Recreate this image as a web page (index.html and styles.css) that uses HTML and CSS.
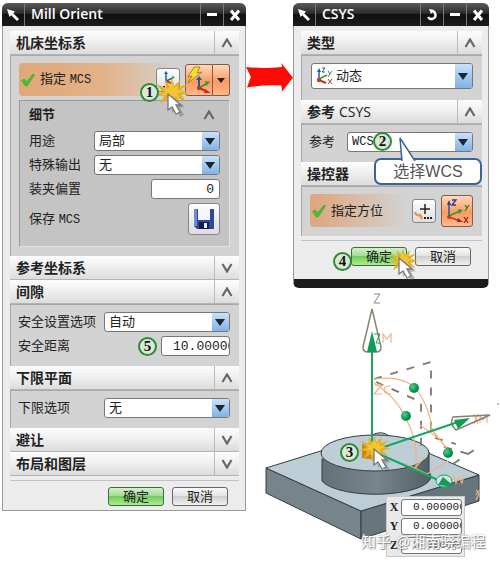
FILE: index.html
```
<!DOCTYPE html>
<html lang="zh-CN">
<head>
  <meta charset="UTF-8">
  <meta name="viewport" content="width=device-width, initial-scale=1.0">
  <title>Mill Orient</title>
  <link rel="stylesheet" href="styles.css">
</head>
<body>
  <svg class="defs" width="0" height="0" aria-hidden="true">
    <symbol id="chevron" viewBox="0 0 12 10"><path d="M1.5 9L6 1.5L10.5 9" fill="none" stroke="#666" stroke-width="2.2"/></symbol>
    <symbol id="pin" viewBox="0 0 14 14"><path d="M1 1L9 3.5L7.2 5.2L13 11L11 13L5.2 7.2L3.5 9Z" fill="#fff"/></symbol>
    <symbol id="minus" viewBox="0 0 12 12"><path d="M1 4H11V7H1Z" fill="#fff"/></symbol>
    <symbol id="close" viewBox="0 0 12 12"><path d="M2 1.5L10 11M10 1.5L2 11" stroke="#fff" stroke-width="3"/></symbol>
    <symbol id="check" viewBox="0 0 14 14"><path d="M0.5 7.5L3.5 6L5.5 9L12 1L13.5 2L6 13H4.5Z" fill="#3fc32e" stroke="#2c9e2a" stroke-width="0.5"/></symbol>
    <symbol id="burst" viewBox="0 0 36 30">
      <path d="M18 0L20 8L26 2L25 9L34 6L27 12L36 15L27 17L33 24L24 20L24 28L19 21L15 30L14 21L6 26L10 18L0 17L9 14L2 6L12 10L11 2L16 8Z" fill="#e0b02a"/>
      <path d="M18 5L20 10L24 7L23 12L30 13L23 16L26 21L19 18L15 23L14 17L7 17L12 14L8 9L14 11Z" fill="#f2c631"/>
    </symbol>
    <symbol id="cursor" viewBox="0 0 18 24">
      <path d="M4 3L5 20L9 16L13 24L17 22L13 15L18 14Z" fill="#555" opacity="0.35"/>
      <path d="M1 1L1 17L5 14L9 21L13 19L9 12L14 12Z" fill="#fff" stroke="#777" stroke-width="1.3"/>
    </symbol>
  </svg>

  <main class="page">
    <section class="dialog dialog-mill">
      <header class="titlebar">
        <span class="pin"><svg width="14" height="14"><use href="#pin"/></svg></span>
        <h1>Mill Orient</h1>
        <button aria-label="Minimize"><svg width="12" height="12"><use href="#minus"/></svg></button>
        <button aria-label="Close"><svg width="12" height="12"><use href="#close"/></svg></button>
      </header>

      <div class="dialog-body">
        <h2 class="group-title">机床坐标系<button aria-label="收起"><svg width="12" height="10"><use href="#chevron"/></svg></button></h2>
        <div class="group">
          <div class="specify">
            <svg width="14" height="14"><use href="#check"/></svg>
            <span class="grow">指定 <span class="mono">MCS</span></span>
            <div class="anchor">
              <button class="tool" aria-label="CSYS 对话框">
                <svg width="20" height="20" viewBox="0 0 20 20"><path d="M8 11V3M8 11L15 8" stroke="#268" stroke-width="1.5" fill="none"/><path d="M8 1L10 4H6Z" fill="#235a9a"/><path d="M14 6L17 7L14 9Z" fill="#2a9c3c"/><path d="M8 11L15 14" stroke="#c33" stroke-width="2"/><path d="M5 17H7M9 17H11M13 17H15" stroke="#222" stroke-width="2"/></svg>
              </button>
              <svg class="burst burst-mcs" width="36" height="30"><use href="#burst"/></svg>
              <b class="step step-1">1</b>
              <svg class="cursor cursor-mcs" width="18" height="24"><use href="#cursor"/></svg>
            </div>
            <div class="split">
              <button class="tool-hot" aria-label="自动判断">
                <svg width="27" height="28" viewBox="0 0 27 28"><path d="M8 1L14 1L11 7L16 6L2 17L6 10L2 11Z" fill="#f7dc2e" stroke="#8c742a" stroke-width="0.8"/><path d="M13 22V13" stroke="#245898" stroke-width="2"/><path d="M13 10L16 14H10Z" fill="#245898"/><path d="M13 22L20 18" stroke="#2a9c3c" stroke-width="2"/><path d="M19 15L24 16L20 20Z" fill="#2a9c3c"/><path d="M13 22L20 25" stroke="#d42a1a" stroke-width="2"/><path d="M19 23L25 27L18 27Z" fill="#d42a1a"/><circle cx="13" cy="22" r="2.2" fill="#b33"/></svg>
              </button>
              <button class="tool-hot drop" aria-label="更多"><svg width="8" height="6"><path d="M0 1H8L4 6Z" fill="#222"/></svg></button>
            </div>
          </div>

          <div class="details">
            <h3>细节<button aria-label="收起"><svg width="12" height="10"><use href="#chevron"/></svg></button></h3>
            <div class="row">
              <label for="use">用途</label>
              <span class="combo"><select id="use"><option>局部</option></select></span>
            </div>
            <div class="row">
              <label for="output">特殊输出</label>
              <span class="combo"><select id="output"><option>无</option></select></span>
            </div>
            <div class="row">
              <label for="offset">装夹偏置</label>
              <input class="field field-right" id="offset" type="text" value="0">
            </div>
            <div class="row row-save">
              <label for="save">保存 <span class="mono">MCS</span></label>
              <button class="tool tool-save" id="save" aria-label="保存 MCS">
                <svg width="22" height="22" viewBox="0 0 22 22"><path d="M1 1H21V21H4L1 18Z" fill="#2f4a9c"/><path d="M1 1H4V18H1Z" fill="#6f8ad0"/><path d="M5 1H17V12H5Z" fill="#f4f6fc"/><path d="M6 14H16V21H6Z" fill="#161e48"/><path d="M11 15H14V20H11Z" fill="#e8eaf4"/></svg>
              </button>
            </div>
          </div>
        </div>

        <h2 class="group-title">参考坐标系<button aria-label="展开"><svg class="flip" width="12" height="10"><use href="#chevron"/></svg></button></h2>

        <h2 class="group-title">间隙<button aria-label="收起"><svg width="12" height="10"><use href="#chevron"/></svg></button></h2>
        <div class="group group-narrow">
          <div class="row">
            <label for="safe">安全设置选项</label>
            <span class="combo"><select id="safe"><option>自动</option></select></span>
          </div>
          <div class="row">
            <label for="distance">安全距离</label>
            <b class="step">5</b>
            <input class="field" id="distance" type="text" value="10.000000">
          </div>
        </div>

        <h2 class="group-title">下限平面<button aria-label="收起"><svg width="12" height="10"><use href="#chevron"/></svg></button></h2>
        <div class="group group-narrow">
          <div class="row">
            <label for="lower">下限选项</label>
            <span class="combo"><select id="lower"><option>无</option></select></span>
          </div>
        </div>

        <h2 class="group-title">避让<button aria-label="展开"><svg class="flip" width="12" height="10"><use href="#chevron"/></svg></button></h2>
        <h2 class="group-title">布局和图层<button aria-label="展开"><svg class="flip" width="12" height="10"><use href="#chevron"/></svg></button></h2>

        <footer class="actions">
          <button class="btn btn-ok">确定</button>
          <button class="btn">取消</button>
        </footer>
      </div>
    </section>

    <svg class="arrow" viewBox="0 0 48 29" aria-hidden="true"><path d="M0 4Q18 6 37 4L36 0L48 15L37 29L36 23Q18 22 1 25L5 14Z" fill="#fb0a06"/></svg>

    <section class="dialog dialog-csys">
      <header class="titlebar">
        <span class="pin"><svg width="14" height="14"><use href="#pin"/></svg></span>
        <h1>CSYS</h1>
        <button aria-label="Reset"><svg width="12" height="12" viewBox="0 0 12 12"><path d="M5 2A4 4 0 1 1 2 8" fill="none" stroke="#fff" stroke-width="2.4"/><path d="M3 0L8 1L5 5Z" fill="#fff"/></svg></button>
        <button aria-label="Minimize"><svg width="12" height="12"><use href="#minus"/></svg></button>
        <button aria-label="Close"><svg width="12" height="12"><use href="#close"/></svg></button>
      </header>

      <div class="dialog-body">
        <h2 class="group-title"><label for="type">类型</label><button aria-label="收起"><svg width="12" height="10"><use href="#chevron"/></svg></button></h2>
        <div class="group group-type">
          <span class="combo combo-type">
            <svg class="combo-icon" width="17" height="18" viewBox="0 0 17 18"><path d="M3 13V4" stroke="#245898" stroke-width="1.5"/><path d="M3 1L5 5H1Z" fill="#245898"/><path d="M3 12L11 8" stroke="#2a9c3c" stroke-width="1.5"/><path d="M3 13L10 16" stroke="#c32" stroke-width="2"/><circle cx="3" cy="13" r="2.2" fill="#c43a22"/><path d="M6 1H9L6 5H9" fill="none" stroke="#245898"/><path d="M12 4L14 7L16 4M14 7L12 10" fill="none" stroke="#2a9c3c"/><path d="M12 12L16 17M16 12L12 17" stroke="#b32"/></svg>
            <select id="type"><option>动态</option></select>
          </span>
        </div>

        <h2 class="group-title"><span>参考 <span class="latin">CSYS</span></span><button aria-label="收起"><svg width="12" height="10"><use href="#chevron"/></svg></button></h2>
        <div class="group group-narrow">
          <div class="row">
            <label for="ref">参考</label>
            <span class="combo">
              <select id="ref" class="mono"><option>WCS</option></select>
              <b class="step step-2">2</b>
              <span class="callout">
                <svg class="callout-tail" width="18" height="24" viewBox="0 0 18 24"><path d="M3 24L1 1L16 24" fill="#fff" stroke="#3c6298" stroke-width="1.5"/></svg>
                选择WCS
              </span>
            </span>
          </div>
        </div>

        <h2 class="group-title">操控器</h2>
        <div class="group">
          <div class="specify specify-handle">
            <svg width="14" height="14"><use href="#check"/></svg>
            <span class="grow">指定方位</span>
            <button class="tool" aria-label="点对话框"><svg width="20" height="20" viewBox="0 0 20 20"><path d="M11 3V13M6 8H16" stroke="#222" stroke-width="1.5"/><path d="M1 11Q2 15 6 14L8 18" stroke="#e39a4a" stroke-width="2.5" fill="none"/><path d="M10 17H12M13 17H15M16 17H18" stroke="#222" stroke-width="2"/></svg></button>
            <button class="tool-hot tool-axes" aria-label="操控器"><svg width="28" height="28" viewBox="0 0 28 28"><path d="M6 20V7" stroke="#245898" stroke-width="1.5"/><path d="M6 3L8 8H4Z" fill="#20409a"/><path d="M6 19L17 14" stroke="#2a9c3c" stroke-width="1.5"/><path d="M15 12L20 13L16 17Z" fill="#2a9c3c"/><path d="M6 20L17 24" stroke="#c32" stroke-width="1.5"/><path d="M15 21L20 25L14 25Z" fill="#a22"/><circle cx="6" cy="20" r="2" fill="#c43a22"/><path d="M9 3H13L9 8H13" fill="none" stroke="#20409a" stroke-width="1.3"/><path d="M22 8L24 11L26 8M24 11L22 14" fill="none" stroke="#27803a" stroke-width="1.3"/><path d="M21 20L25 26M25 20L21 26" stroke="#922" stroke-width="1.3"/></svg></button>
          </div>
        </div>

        <footer class="actions">
          <div class="anchor">
            <button class="btn btn-ok">确定</button>
            <b class="step step-4">4</b>
            <svg class="burst burst-ok" width="30" height="26"><use href="#burst"/></svg>
            <svg class="cursor cursor-ok" width="18" height="24"><use href="#cursor"/></svg>
          </div>
          <button class="btn">取消</button>
        </footer>
      </div>
    </section>

    <div class="scene">
      <svg class="model" viewBox="246 290 254 276" aria-hidden="true">
        <defs>
          <linearGradient id="disc" x1="0" x2="1"><stop offset="0" stop-color="#647176"/><stop offset="0.5" stop-color="#77868a"/><stop offset="1" stop-color="#526065"/></linearGradient>
          <radialGradient id="ball" cx="0.35" cy="0.35"><stop offset="0" stop-color="#52cf8f"/><stop offset="1" stop-color="#07904c"/></radialGradient>
        </defs>
        <!-- base plate -->
        <g stroke="#343c40" stroke-width="1">
          <path d="M266 468L361 511V539L266 493Z" fill="#75858b"/>
          <path d="M361 511L479 475V501L361 539Z" fill="#66767c"/>
          <path d="M266 468L372 435Q382 430 389 436L479 475L361 511Z" fill="#bccdd6"/>
          <path d="M322 459V481A53 17 0 0 0 429 472V452Z" fill="url(#disc)"/>
          <ellipse cx="375" cy="453" rx="54" ry="18" fill="#bdced7"/>
        </g>
        <!-- rotation handles -->
        <g fill="none" stroke="#7f7667" stroke-width="1.8" stroke-dasharray="8 9">
          <path d="M374 379L431 362V430M376 382L421 402V452"/>
          <path d="M435 438L456 444M444 447L476 456M453 464L477 448"/>
        </g>
        <g fill="none" stroke="#efb184" stroke-width="1.2">
          <path d="M374 379Q404 375 417 390Q430 408 432 430L449 451"/>
          <path d="M374 383Q397 397 407 421Q418 441 416 469"/>
          <path d="M420 425L438 438L430 426M404 463L427 474L448 461M413 470L425 457"/>
          <path d="M374 385H382L374 394H382M391 386Q384 386 384 390Q384 394 391 394"/>
          <path d="M383 343V334L387 339L391 334V343"/>
          <path d="M453 475L456 483L459 477L462 483L464 475M474 414L478 424M478 414L474 424M480 423V416L483 420L487 415V423"/>
          <path d="M476 490L479 494L476 500M479 490L476 495"/>
        </g>
        <g fill="none" stroke="#8a8172" stroke-width="1.5">
          <path d="M372 309L363 347Q363 352 368 352H376Q381 352 381 347Z"/>
          <path d="M490 415L453 417Q449 424 456 430Z"/>
          <path d="M374 294H380L374 303H380" stroke-width="1"/>
          <path d="M498 403V405" stroke-width="1"/>
        </g>
        <g stroke="#16a565" stroke-width="2" fill="none">
          <path d="M372 448V340M372 451L464 420M372 451L445 483"/>
          <path d="M374 334H380L376 343H380" stroke-width="1"/>
          <ellipse cx="444" cy="481" rx="8" ry="6" fill="#d4eadf" stroke-width="1"/>
        </g>
        <g fill="#0f9d58">
          <path d="M372 331L377 352H367Z"/>
          <path d="M470 418L458 429L454 420Z"/>
          <path d="M455 487L438 485L443 477Z"/>
        </g>
        <g fill="url(#ball)">
          <circle cx="414" cy="388" r="5"/><circle cx="406" cy="416" r="5"/><circle cx="448" cy="453" r="5"/>
        </g>
        <path d="M362 444L376 442V460L362 458Z" fill="#c9851f"/>
        <use href="#burst" x="358" y="435" width="33" height="27"/>
        <use href="#cursor" x="373" y="448" width="18" height="24"/>
      </svg>
      <b class="step step-3">3</b>
      <div class="coords">
        <label for="cx">X</label><input class="field" id="cx" type="text" value="0.000000">
        <label for="cy">Y</label><input class="field" id="cy" type="text" value="0.000000">
        <label for="cz">Z</label><input class="field" id="cz" type="text" value="0.000000">
      </div>
      <span class="watermark">知乎 @湘南晓编程</span>
    </div>
  </main>
</body>
</html>
```

FILE: styles.css
```
* {
  margin: 0;
  padding: 0;
  box-sizing: border-box;
}

body {
  font-family: "Liberation Sans", "Noto Sans CJK SC", sans-serif;
  font-size: 13px;
  line-height: 18px;
  color: #222;
  background-color: #fff;
}

button,
input,
select {
  font: inherit;
  color: inherit;
}

button {
  border: none;
  background: none;
  cursor: pointer;
}

svg {
  display: block;
  flex: none;
}

.defs {
  position: absolute;
}

.flip {
  transform: scaleY(-1);
}

.mono {
  font-family: "Liberation Mono", monospace;
  font-size: 12px;
}

.page {
  display: grid;
  grid-template-columns: 244fr 47fr 207fr;
  grid-template-rows: auto 1fr;
  padding: 3px 0 0 2px;
}

/* dialogs */
.dialog {
  background-color: #ececec;
  border: 1px solid #9a9a9a;
  border-top: none;
  border-radius: 6px 6px 0 0;
}

.dialog-mill {
  grid-row: 1 / 3;
  align-self: start;
}

.dialog-csys {
  margin-right: 11px;
  border-bottom: 9px solid #1c1c1c;
  border-radius: 6px;
}

.titlebar {
  display: flex;
  height: 23px;
  margin: 0 -1px;
  border-radius: 6px 6px 0 0;
  background: linear-gradient(#5a5a5a, #2c2c2c 45%, #111 50%, #1c1c1c);
  color: #fff;
}

.titlebar h1 {
  flex: 1;
  padding-left: 6px;
  font: 600 14px/22px "Open Sans", sans-serif;
}

.titlebar button,
.pin {
  display: flex;
  align-items: center;
  justify-content: center;
  width: 23px;
  border-left: 1px solid #777;
}

.pin {
  border-left: none;
  border-right: 1px solid #777;
}

.dialog-body {
  padding: 5px 6px 4px 7px;
}

.group-title {
  display: flex;
  align-items: center;
  height: 24px;
  padding-left: 6px;
  font-size: 14px;
  font-weight: bold;
  background: linear-gradient(#fdfdfd, #eeeeee 50%, #dcdcdc);
  border-bottom: 1px solid #b4b4b4;
}

.group-title button {
  display: flex;
  align-items: center;
  justify-content: center;
  width: 25px;
  height: 23px;
  margin-left: auto;
  border-left: 1px solid #bbb;
}

.latin {
  font-family: "Open Sans", sans-serif;
  font-weight: normal;
}

.group {
  padding: 7px 9px 9px 8px;
  background-color: #d3d3d3;
  border: 1px solid #a9a9a9;
  border-width: 1px 0 0 1px;
}

.group-narrow {
  padding: 5px 9px 8px 7px;
}

.group-type {
  padding: 7px 9px 11px 9px;
}

.specify {
  display: flex;
  align-items: center;
  height: 33px;
  padding-left: 2px;
  gap: 5px;
  border-radius: 4px;
  background: linear-gradient(90deg, #dfa878, #e3b288 40%, #d3d3d3 75%);
}

.specify-handle {
  background: linear-gradient(90deg, #dfa57c, #d3d3d3 60%);
}

.grow {
  flex: 1;
}

.anchor {
  position: relative;
}

.tool,
.tool-hot {
  display: flex;
  align-items: center;
  justify-content: center;
  width: 24px;
  height: 24px;
  border: 1px solid #85858c;
  border-radius: 3px;
  background: linear-gradient(#fefefe, #dcdce2);
}

.tool-save {
  width: 32px;
  height: 32px;
  margin-left: auto;
}

.tool-hot {
  width: 28px;
  height: 32px;
  border-color: #7d5c4a;
  border-radius: 3px 0 0 3px;
  background: linear-gradient(#ffd9bd, #fb9a61 55%, #ffb888);
}

.tool-axes {
  width: 32px;
  border-radius: 3px;
}

.split {
  display: flex;
}

.drop {
  width: 17px;
  border-left: none;
  border-radius: 0 3px 3px 0;
}

.details {
  margin-top: 4px;
  padding: 0 9px 9px;
  background-color: #c4c4c4;
  border: 1px solid #999;
  border-color: #999 #e2e2e2 #e2e2e2 #999;
}

.details h3 {
  display: flex;
  align-items: center;
  justify-content: space-between;
  height: 28px;
  font-size: 13px;
}

.details h3 button {
  padding-right: 5px;
}

.row {
  display: flex;
  align-items: center;
  height: 24px;
}

.row-save {
  height: 36px;
}

/* text boxes and drop-downs */
.combo {
  position: relative;
  display: block;
  width: 126px;
  height: 20px;
  margin-left: auto;
}

.combo-type {
  width: auto;
  height: 26px;
}

.combo select {
  width: 100%;
  height: 100%;
  padding-left: 4px;
  border: 1px solid #777;
  border-radius: 3px;
  background-color: #fff;
  appearance: none;
}

.combo-type select {
  padding-left: 24px;
}

.combo-icon {
  position: absolute;
  left: 5px;
  top: 4px;
}

.combo::after {
  content: "";
  position: absolute;
  top: 1px;
  right: 1px;
  bottom: 1px;
  width: 17px;
  border-radius: 0 2px 2px 0;
  background: linear-gradient(#c9e2fa, #7fb2e8);
  pointer-events: none;
}

.combo::before {
  content: "";
  position: absolute;
  z-index: 1;
  top: calc(50% - 3px);
  right: 5px;
  border: 5px solid transparent;
  border-top: 7px solid #1c2733;
  border-bottom: none;
  pointer-events: none;
}

.field {
  width: 69px;
  height: 20px;
  margin-left: auto;
  padding: 0 0 0 11px;
  border: 1px solid #777;
  border-radius: 3px;
  background-color: #fff;
  font-family: "Liberation Mono", monospace;
}

.field-right {
  padding: 0 5px 0 0;
  text-align: right;
}

.actions {
  display: flex;
  justify-content: flex-end;
  gap: 8px;
  margin-top: 4px;
  padding: 6px 11px 0 0;
  border-top: 1px solid #c2c2c2;
}

.dialog-csys .actions {
  padding-bottom: 9px;
}

.btn {
  display: block;
  width: 56px;
  height: 19px;
  line-height: 16px;
  border: 1px solid #666;
  border-radius: 3px;
  background: linear-gradient(#fafafa, #e4e4e4 45%, #cfcfcf 50%, #f0f0f0);
}

.btn-ok {
  border-color: #3f6b3a;
  background: linear-gradient(#d5f0cc, #a5dc96 45%, #74c95f 50%, #a9f08c);
}

/* numbered steps and pointers, drawn over the dialogs */
.step {
  width: 19px;
  height: 19px;
  border: 2px solid #2f8a34;
  border-radius: 50%;
  background-color: #dbe8d8;
  font-family: "Liberation Serif", serif;
  font-size: 15px;
  line-height: 15px;
  text-align: center;
  color: #111;
}

.row > .step {
  margin-left: auto;
  margin-right: 4px;
}

.row > .step + .field {
  margin-left: 0;
}

.step-1,
.step-2,
.step-3,
.step-4,
.burst,
.cursor {
  position: absolute;
  z-index: 2;
}

.step-1 {
  left: -16px;
  top: 15px;
}

.burst-mcs {
  left: -2px;
  top: 10px;
}

.cursor-mcs {
  left: 11px;
  top: 25px;
}

.step-2 {
  left: 26px;
  top: 0;
}

.step-4 {
  left: -18px;
  top: 5px;
}

.burst-ok {
  left: 37px;
  top: 1px;
}

.cursor-ok {
  left: 47px;
  top: 10px;
}

.callout {
  position: absolute;
  z-index: 2;
  left: 27px;
  top: 26px;
  width: 108px;
  height: 27px;
  border: 2px solid #3c6298;
  border-radius: 7px;
  background-color: #fff;
  font-size: 16px;
  line-height: 23px;
  text-align: center;
  color: #555;
}

.callout-tail {
  position: absolute;
  left: 23px;
  top: -23px;
}

.arrow {
  width: 100%;
  margin-top: 60px;
}

/* part with the movable axes */
.scene {
  position: relative;
  grid-column: 2 / 4;
  margin-top: 2px;
}

.model {
  width: 100%;
}

.step-3 {
  left: 94px;
  top: 153px;
}

.coords {
  position: absolute;
  left: 140px;
  top: 206px;
  display: grid;
  grid-template-columns: 10px 61px;
  gap: 2px;
  padding: 2px;
  align-items: center;
  background-color: #e9e9ec;
  border: 1px solid #c8c8cc;
  font: bold 12px/17px "Liberation Serif", serif;
  text-align: center;
}

.coords .field {
  width: 61px;
  height: 17px;
  font-size: 11px;
  font-weight: normal;
}

.watermark {
  position: absolute;
  left: 115px;
  top: 241px;
  font-size: 15px;
  line-height: 22px;
  white-space: nowrap;
  color: #fff;
  text-shadow: 1px 1px 1px #888, 0 0 2px #999;
}
```
